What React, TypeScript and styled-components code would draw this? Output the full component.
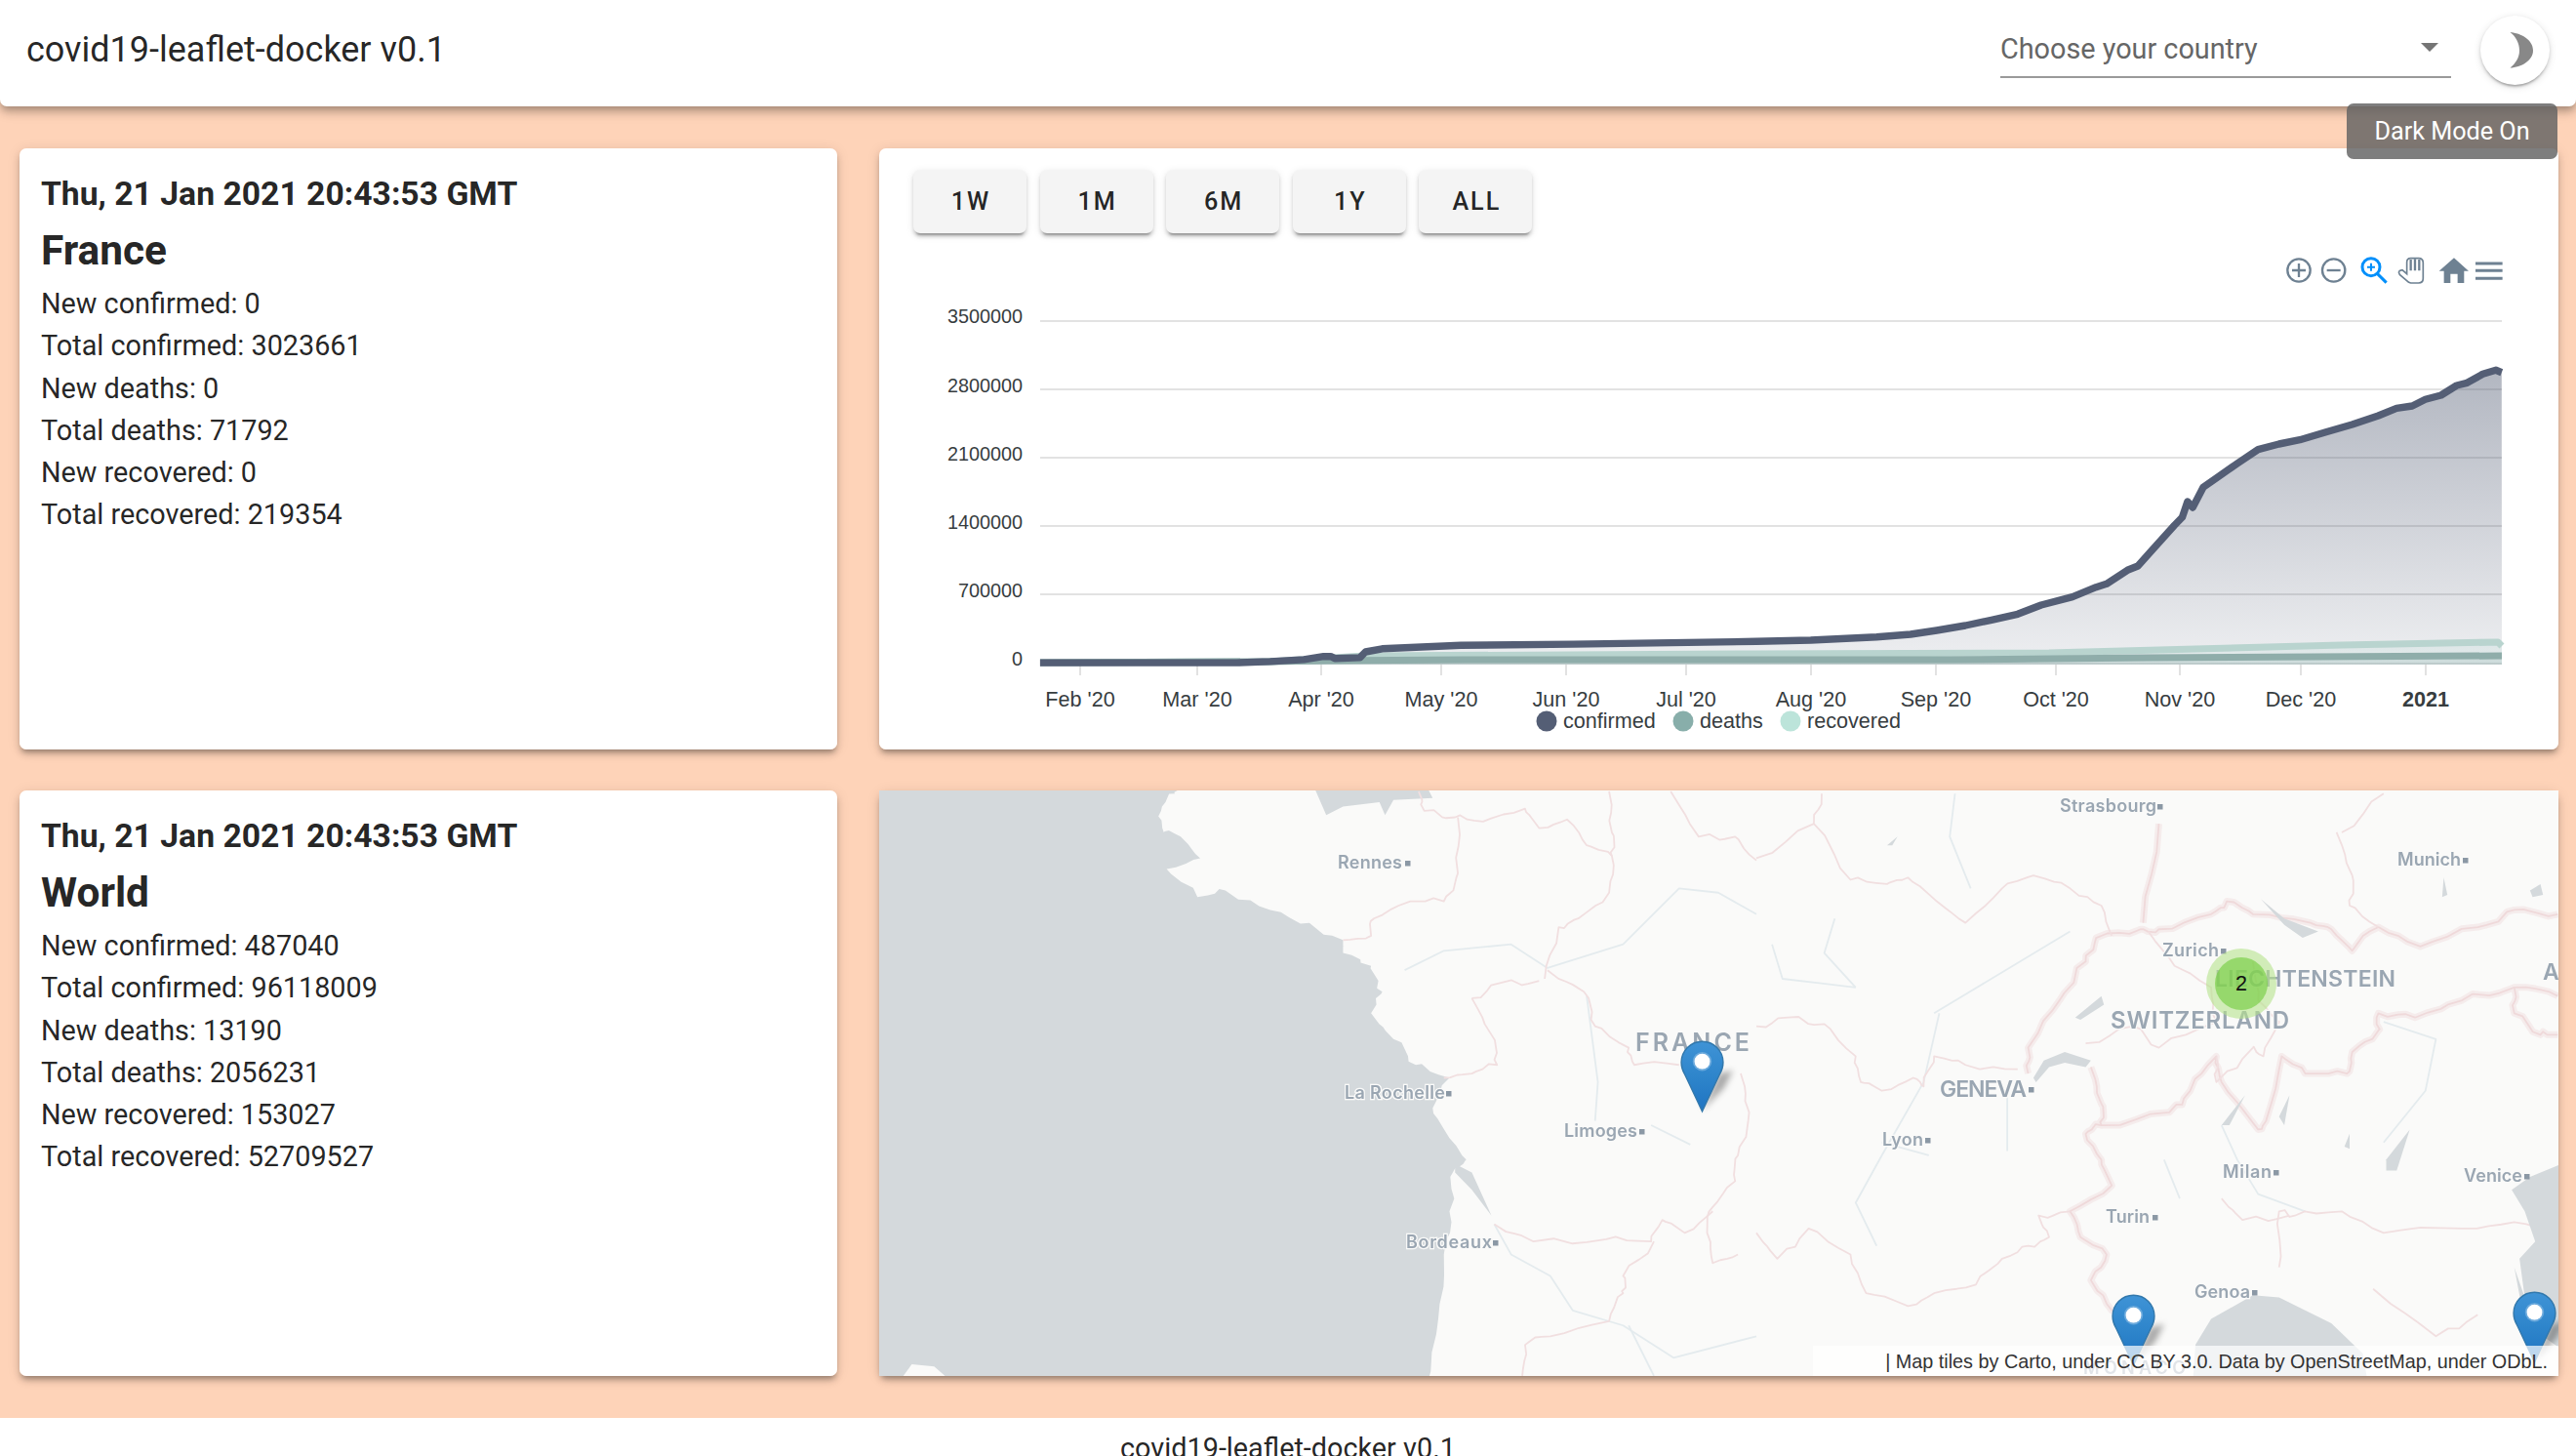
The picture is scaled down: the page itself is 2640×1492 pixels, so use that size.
import React from "react";
import styled, { createGlobalStyle } from "styled-components";

const GlobalStyle = createGlobalStyle`
  html, body {
    margin: 0;
    height: 100%;
    overflow: hidden;
    background: #fed3b8;
    font-family: Roboto, "Liberation Sans", sans-serif;
    color: rgba(0, 0, 0, 0.87);
  }
`;

const Header = styled.header`
  position: relative;
  z-index: 2;
  display: flex;
  align-items: center;
  justify-content: space-between;
  height: 109px;
  padding: 0 27px;
  background: #fff;
  border-radius: 0 0 7px 7px;
  box-shadow: 0 3.6px 7px -2px rgba(0, 0, 0, 0.2), 0 7px 9px 0 rgba(0, 0, 0, 0.14), 0 2px 18px 0 rgba(0, 0, 0, 0.12);
`;

const Title = styled.div`
  font-size: 36px;
  line-height: 1;
  margin-top: -8px;
`;

const Actions = styled.div`
  display: flex;
  align-items: flex-start;
  gap: 30px;
  height: 109px;
`;

const CountrySelect = styled.div`
  display: flex;
  align-items: center;
  justify-content: space-between;
  box-sizing: border-box;
  width: 462px;
  height: 64px;
  margin-top: 16px;
  padding: 6px 13px 0 0;
  border-bottom: 2px solid #9a9a9a;
  color: #666;
  font-size: 28.8px;
`;

const Caret = styled.span`
  width: 0;
  height: 0;
  margin-top: -4px;
  border-left: 9px solid transparent;
  border-right: 9px solid transparent;
  border-top: 9px solid #757575;
`;

const MoonButton = styled.button`
  display: block;
  width: 71px;
  height: 71px;
  margin-top: 16px;
  padding: 0;
  border: 0;
  border-radius: 50%;
  background: #fff;
  box-shadow: 0 3.6px 2px -2px rgba(0, 0, 0, 0.2), 0 2px 3.6px 0 rgba(0, 0, 0, 0.14), 0 2px 9px 0 rgba(0, 0, 0, 0.12);
  svg { display: block; }
`;

const Tooltip = styled.div`
  position: absolute;
  top: 106px;
  right: 19px;
  z-index: 3;
  box-sizing: border-box;
  width: 216px;
  height: 57px;
  border-radius: 7px;
  background: rgba(97, 97, 97, 0.82);
  color: #fff;
  font-size: 25.2px;
  line-height: 57px;
  text-align: center;
`;

const Main = styled.main`
  display: grid;
  grid-template-columns: 838px 1721px;
  grid-template-rows: 616px 600px;
  gap: 42px 43px;
  padding: 43px 18px 43px 20px;
`;

const Card = styled.section`
  position: relative;
  overflow: hidden;
  background: #fff;
  border-radius: 7px;
`;

const Shell = styled.div`
  border-radius: 7px;
  box-shadow: 0 5px 5px -3.6px rgba(0, 0, 0, 0.25), 0 5px 7px 0 rgba(0, 0, 0, 0.16), 0 2px 14px 0 rgba(0, 0, 0, 0.1);
`;

const InfoCard = styled(Card)`
  box-sizing: border-box;
  height: 100%;
  padding: 18px 22px;
`;

const Stamp = styled.div`
  font-size: 33.7px;
  font-weight: 700;
  line-height: 57.6px;
`;

const Place = styled.div`
  font-size: 42.4px;
  font-weight: 700;
  line-height: 57.6px;
`;

const Stats = styled.div`
  margin-top: 5px;
`;

const Stat = styled.div`
  font-size: 28.8px;
  line-height: 43.2px;
`;

const ChartCard = styled(Card)`
  height: 100%;
`;

const RangeBar = styled.div`
  display: flex;
  gap: 13.6px;
  padding: 22px 35px 0;
`;

const RangeButton = styled.button`
  width: 116px;
  height: 65px;
  padding: 0 0 0 2px;
  border: 0;
  border-radius: 7px;
  background: #f4f4f4;
  color: rgba(0, 0, 0, 0.87);
  font-family: Roboto, sans-serif;
  font-size: 25.2px;
  font-weight: 500;
  letter-spacing: 2px;
  box-shadow: 0 5px 2px -3px rgba(0, 0, 0, 0.25), 0 3.6px 3.6px 0 rgba(0, 0, 0, 0.14), 0 2px 9px 0 rgba(0, 0, 0, 0.1);
`;

const ChartSvg = styled.svg`
  display: block;
  width: 1721px;
  height: 529px;
  text {
    font-family: "Liberation Sans", Arial, sans-serif;
    fill: #373d3f;
  }
`;

const MapCard = styled(Card)`
  height: 100%;
  border-radius: 0;
`;

const MapSvg = styled.svg`
  display: block;
  width: 1721px;
  height: 600px;
  filter: blur(0.6px);
`;

const Thin = styled.polyline`
  fill: none;
  stroke: #f1dfe0;
  stroke-width: 1.8;
  vector-effect: non-scaling-stroke;
  stroke-linejoin: round;
`;

const Halo = styled(Thin)`
  stroke: #f5ecec;
  stroke-width: 7;
`;

const Core = styled(Thin)`
  stroke: #efd9da;
`;

const River = styled(Thin)`
  stroke: #e4ebee;
`;

const Water = styled.polygon`
  fill: #d4d9dc;
`;

const CityLabel = styled.text`
  font-family: Inter, "Open Sans", sans-serif;
  font-weight: 600;
  fill: #9aa6b2;
  stroke: #fafaf9;
  stroke-width: 2.5;
  paint-order: stroke;
`;

const CityDot = styled.rect`
  fill: #8b98a5;
`;

const Pin = styled.svg<{ $x: number; $y: number }>`
  position: absolute;
  left: ${(p) => p.$x}px;
  top: ${(p) => p.$y}px;
  overflow: visible;
`;

const Cluster = styled.div`
  position: absolute;
  left: 1360px;
  top: 162px;
  display: flex;
  align-items: center;
  justify-content: center;
  width: 72px;
  height: 72px;
  border-radius: 50%;
  background: rgba(181, 226, 140, 0.6);
`;

const ClusterCore = styled.div`
  width: 54px;
  height: 54px;
  border-radius: 50%;
  background: rgba(110, 204, 57, 0.6);
  color: #111;
  font-family: "Liberation Sans", Arial, sans-serif;
  font-size: 21.6px;
  line-height: 54px;
  text-align: center;
`;

const Attribution = styled.div`
  position: absolute;
  right: 0;
  bottom: 0;
  box-sizing: border-box;
  width: 764px;
  height: 31px;
  padding-right: 11px;
  background: rgba(255, 255, 255, 0.7);
  color: #333;
  font-family: "Liberation Sans", Arial, sans-serif;
  font-size: 19.8px;
  line-height: 33px;
  text-align: right;
  white-space: nowrap;
`;

const Footer = styled.footer`
  height: 60px;
  padding-top: 10px;
  background: #fff;
  font-size: 28.8px;
  line-height: 43.2px;
  text-align: center;
`;

type Point = [number, number];

const fromLeft = (pts: Point[]): Point[] => pts.map(([x, y]) => [900 + x / 1.742, 150 + y / 2.529]);
const fromRight = (pts: Point[]): Point[] => pts.map(([x, y]) => [1800 + x / 1.867, 340 + y / 3]);
const toPath = (pts: Point[]) => "M" + pts.map((p) => `${p[0].toFixed(1)} ${p[1].toFixed(1)}`).join("L");

// breaks straight runs up so borders and coasts don't look ruled
const wiggle = (points: string, amount = 9, steps = 4) => {
  const pts = points.split(" ").map((p) => p.split(",").map(Number));
  const out: string[] = [];
  let seed = 7;
  pts.forEach((p, i) => {
    out.push(p.join(","));
    const next = pts[i + 1];
    if (!next) return;
    for (let s = 1; s < steps; s++) {
      seed = (seed * 31 + 11) % 97;
      const t = s / steps;
      const dx = ((seed % 9) / 8 - 0.5) * amount;
      const dy = (((seed >> 2) % 9) / 8 - 0.5) * amount * 1.6;
      out.push(`${(p[0] + (next[0] - p[0]) * t + dx).toFixed(1)},${(p[1] + (next[1] - p[1]) * t + dy).toFixed(1)}`);
    }
  });
  return out.join(" ");
};

const confirmed: Point[] = [
  ...fromLeft([[289, 1338], [640, 1338], [700, 1335], [760, 1330], [795, 1322], [808, 1322], [815, 1327], [860, 1325], [870, 1310], [900, 1302], [1040, 1293], [1240, 1290]]),
  ...fromRight([[0, 952], [104, 948], [230, 938], [295, 930], [345, 918], [400, 903], [450, 886], [500, 868], [545, 840], [605, 815], [650, 785], [670, 775], [710, 733], [730, 720], [755, 675], [800, 595], [815, 570], [825, 522], [835, 540], [855, 478], [880, 450], [920, 405], [960, 362], [1000, 345], [1040, 332], [1090, 308], [1140, 285], [1190, 258], [1225, 235], [1255, 228], [1280, 208], [1310, 195], [1340, 165], [1360, 157], [1390, 130], [1415, 118], [1426, 125]]),
];
const deaths: Point[] = [[1066, 679], [1300, 678], [1360, 677], [1500, 676], [2000, 676], [2200, 674], [2564, 672]];
const recovered: Point[] = [[1066, 679], [1300, 678], [1400, 672], [1800, 670], [2100, 669], [2250, 665], [2400, 661], [2560, 658], [2564, 662]];

const closeArea = (pts: Point[]) => `${toPath(pts)}L2564 681L1066 681Z`;

const gridRows = [
  { value: "3500000", y: 329, base: 331 },
  { value: "2800000", y: 399, base: 402 },
  { value: "2100000", y: 469, base: 472 },
  { value: "1400000", y: 539, base: 542 },
  { value: "700000", y: 609, base: 612 },
  { value: "0", y: 680, base: 682 },
];

const months = [
  { label: "Feb '20", x: 1107 },
  { label: "Mar '20", x: 1227 },
  { label: "Apr '20", x: 1354 },
  { label: "May '20", x: 1477 },
  { label: "Jun '20", x: 1605 },
  { label: "Jul '20", x: 1728 },
  { label: "Aug '20", x: 1856 },
  { label: "Sep '20", x: 1984 },
  { label: "Oct '20", x: 2107 },
  { label: "Nov '20", x: 2234 },
  { label: "Dec '20", x: 2358 },
  { label: "2021", x: 2486 },
];

const legend = [
  { label: "confirmed", color: "#545e75", x: 1585 },
  { label: "deaths", color: "#88aeaa", x: 1725 },
  { label: "recovered", color: "#bce4da", x: 1835 },
];

const ToolIcons = () => (
  <g transform="translate(2280 240) scale(0.3333)" fill="none" stroke="#6e8192" strokeWidth="7">
    <circle cx="228" cy="111" r="35" />
    <path d="M228 90v42M207 111h42" />
    <circle cx="335" cy="111" r="35" />
    <path d="M314 111h42" />
    <g stroke="#008ffb" strokeWidth="9">
      <circle cx="450" cy="101" r="27" />
      <path d="M469 121l28 28" />
      <path d="M450 89v24M438 101h24" strokeWidth="6" />
    </g>
    <path d="M566 148L538 124Q530 112 546 110L560 122V86Q560 74 572 74H596Q610 74 610 88V136Q610 150 596 150H572Z" strokeWidth="5" />
    <path d="M572 78v34M585 76v36M598 78v34" strokeWidth="7" />
    <path d="M659 113L705 73L750 113H736V150H716V122H694V150H674V113Z" fill="#6e8192" stroke="none" />
    <path d="M771 90h83M771 112h83M771 136h83" strokeWidth="9" />
  </g>
);

const Chart = () => (
  <ChartSvg viewBox="901 239 1721 529">
    <defs>
      <linearGradient id="areaFade" x1="0" y1="0" x2="0" y2="1">
        <stop offset="0" stopColor="#545e75" stopOpacity="0.45" />
        <stop offset="1" stopColor="#545e75" stopOpacity="0.1" />
      </linearGradient>
    </defs>
    <ToolIcons />
    {gridRows.map((row) => (
      <g key={row.value}>
        <line x1="1066" x2="2564" y1={row.y} y2={row.y} stroke="#e2e2e2" strokeWidth="2" />
        <text x="1048" y={row.base} fontSize="19.8" textAnchor="end">{row.value}</text>
      </g>
    ))}
    {months.map((m) => (
      <g key={m.label}>
        <line x1={m.x} x2={m.x} y1="681" y2="692" stroke="#e2e2e2" strokeWidth="2" />
        <text x={m.x} y="724" fontSize="21.6" textAnchor="middle" fontWeight={m.label === "2021" ? 700 : 400}>{m.label}</text>
      </g>
    ))}
    <path d={closeArea(recovered)} fill="#bce4da" fillOpacity="0.2" />
    <path d={closeArea(deaths)} fill="#88aeaa" fillOpacity="0.2" />
    <path d={closeArea(confirmed)} fill="url(#areaFade)" />
    <path d={toPath(recovered)} fill="none" stroke="#b9d4cf" strokeWidth="7" strokeLinejoin="round" />
    <path d={toPath(deaths)} fill="none" stroke="#8fadaa" strokeWidth="7" strokeLinejoin="round" />
    <path d={toPath(confirmed)} fill="none" stroke="#545e75" strokeWidth="7.4" strokeLinejoin="round" />
    {legend.map((item) => (
      <g key={item.label}>
        <circle cx={item.x} cy="739" r="10.5" fill={item.color} />
        <text x={item.x + 17} y="746" fontSize="21.6">{item.label}</text>
      </g>
    ))}
  </ChartSvg>
);

const westCoast =
  "-20,-10 535,-10 530,30 505,70 510,120 540,130 575,180 515,205 570,270 620,255 700,300 770,330 830,370 830,400 880,430 900,490 880,540 920,600 960,660 1020,690 990,760 1020,830 1050,880 1030,900 1020,1000 1010,1100 1000,1250 980,1400 -20,1400";
const channel = "770,-10 800,80 830,60 895,50 905,80 920,45 990,40 970,-10";
const gironde = "1030,890 1060,910 1095,1010 1060,950 1030,910";

const leftBorders = [
  "965,25 975,70 1030,85 1080,95 1155,65 1180,110 1230,90 1265,150 1310,175 1305,260 1250,320 1215,340 1190,460",
  "1035,85 1035,215 1010,280 950,280 885,320 880,360 830,370",
  "1305,25 1310,120 1310,175",
  "1415,25 1465,130 1530,130 1568,185",
  "1195,440 1260,490 1280,570 1340,620 1350,660 1430,660",
  "1060,505 1110,470 1180,465",
  "1060,505 1095,590 1105,660 1060,680 1010,690",
  "1540,680 1555,770 1535,870 1530,930 1490,990 1480,1050 1490,1120 1535,1100",
  "1100,1030 1170,1070 1300,1065 1380,1070 1400,1020 1440,1050 1490,1000",
  "1385,1070 1330,1150 1330,1190 1305,1255 1200,1290 1155,1310 1150,1382",
];
const leftRivers = [
  "940,440 1010,395 1130,380 1195,435 1330,380 1430,250 1500,260 1568,310",
  "1265,500 1285,700 1280,790",
  "1380,800 1450,845",
  "1100,1030 1130,1100 1200,1150 1240,1230 1330,1265 1420,1340 1568,1290",
  "1340,1265 1385,1382",
];
const nationalBorders = [
  "1533,310 1450,300 1380,340 1270,385 1190,340 1140,395 1100,345 1060,330 950,310 900,280 870,310 770,345 735,345 650,365 630,420 580,510 520,620 520,680",
  "640,665 660,750 660,800 630,820 660,880 680,940 600,1000 620,1060 670,1100 640,1160 680,1230 720,1260",
  "660,800 790,770 830,720 880,640 890,700 960,810 975,790 1005,640 1050,680 1130,680 1140,630 1190,580 1190,540 1260,550 1350,510 1450,480 1533,500",
  "1450,480 1450,540 1500,590 1533,590",
  "770,100 740,330",
];
const rightBorders = [
  "125,30 110,100 180,230 250,240 290,225 345,280 400,330 470,250 530,220 600,250 660,290 680,360",
  "0,180 110,100",
  "0,570 60,550 130,565 190,640 200,700 240,720 300,690 320,710 340,640 400,660 500,670",
  "0,1050 40,1110 100,1040 180,1100 210,1190 290,1220 340,1190 420,1170 470,1110 520,1080 560,1060 540,1010 600,1000",
  "1110,120 1140,220 1135,290 1190,340",
  "1120,120 1200,30",
  "1000,1130 1000,1000 1030,1010 1120,1000 1200,1050 1350,1040 1450,1025 1533,1050",
  "890,970 930,1020 1020,1010",
  "1180,1180 1300,1290 1380,1240",
  "1490,1040 1533,1100",
  "880,640 880,700 950,620 970,640 1000,560 960,510 950,420",
  "630,610 720,570 770,620 880,560 870,480 800,430 750,350",
];
const rightRivers = [
  "380,30 370,130 410,250",
  "30,380 50,460 120,470 190,480",
  "150,320 130,400 190,480",
  "350,540 320,700 240,870 190,980 230,1080",
  "480,720 480,860",
  "600,350 340,540",
  "240,840 330,870",
  "890,800 920,880 960,960 1050,1000",
  "1200,560 1300,600 1280,720 1200,840",
  "780,880 810,970",
];
const lakes = [
  "530,690 550,650 590,630 640,650 630,665 590,655 560,665 535,700",
  "610,550 660,500 665,520 620,555",
  "965,275 1010,320 1075,350 1045,365 1010,335",
  "890,800 935,730 905,800",
  "1205,880 1250,810 1225,905 1205,905",
  "1010,800 1020,730 1000,780",
  "250,150 270,130 260,150",
  "1315,225 1322,265 1312,270",
  "1480,255 1500,240 1505,265 1485,270",
  "1125,850 1135,820 1135,855",
  "835,1400 840,1310 870,1250 950,1195 1000,1200 1100,1260 1160,1330 1170,1400",
  "1540,890 1480,920 1445,950 1470,1000 1490,1070 1460,1110 1470,1200 1450,1130 1470,1260 1540,1320",
];

const cities: { name: string; from: number; to: number; y: number; size: number; dot?: number }[] = [
  { name: "Rennes", from: 1371, to: 1437, y: 884, size: 18, dot: 1443 },
  { name: "La Rochelle", from: 1378, to: 1481, y: 1120, size: 18, dot: 1485 },
  { name: "Limoges", from: 1603, to: 1678, y: 1159, size: 18, dot: 1683 },
  { name: "Bordeaux", from: 1441, to: 1529, y: 1273, size: 18, dot: 1533 },
  { name: "FRANCE", from: 1676, to: 1793, y: 1068, size: 25 },
  { name: "Strasbourg", from: 2111, to: 2210, y: 826, size: 18, dot: 2214 },
  { name: "Munich", from: 2457, to: 2522, y: 881, size: 18, dot: 2527 },
  { name: "Zurich", from: 2216, to: 2274, y: 974, size: 18, dot: 2279 },
  { name: "LIECHTENSTEIN", from: 2270, to: 2455, y: 1003, size: 23 },
  { name: "SWITZERLAND", from: 2163, to: 2346, y: 1045, size: 24 },
  { name: "GENEVA", from: 1988, to: 2077, y: 1116, size: 23, dot: 2082 },
  { name: "Lyon", from: 1929, to: 1971, y: 1168, size: 18, dot: 1976 },
  { name: "Milan", from: 2278, to: 2328, y: 1201, size: 18, dot: 2333 },
  { name: "Venice", from: 2525, to: 2585, y: 1205, size: 18, dot: 2590 },
  { name: "Turin", from: 2158, to: 2203, y: 1247, size: 18, dot: 2209 },
  { name: "Genoa", from: 2249, to: 2306, y: 1324, size: 18, dot: 2311 },
  { name: "A", from: 2606, to: 2622, y: 996, size: 23 },
  { name: "MONACO", from: 2135, to: 2240, y: 1402, size: 18 },
];

const MapTiles = () => (
  <MapSvg viewBox="901 810 1721 600">
    <rect x="901" y="810" width="1721" height="600" fill="#fafaf9" />
    <g transform="translate(900 800) scale(0.574 0.4413)">
      <Water points={wiggle(westCoast, 12)} />
      <Water points={channel} />
      <Water points={gironde} />
      <polygon points="35,1400 60,1355 100,1360 135,1400" fill="#fafaf9" />
      {leftRivers.map((p) => <River key={p} points={p} />)}
      {leftBorders.map((p) => <Thin key={p} points={wiggle(p)} />)}
    </g>
    <g transform="translate(1800 800) scale(0.5357 0.4413)">
      {rightRivers.map((p) => <River key={p} points={p} />)}
      {nationalBorders.map((p) => <Halo key={p} points={wiggle(p)} />)}
      {nationalBorders.map((p) => <Core key={p} points={wiggle(p)} />)}
      {rightBorders.map((p) => <Thin key={p} points={wiggle(p)} />)}
      {lakes.map((p) => <Water key={p} points={p} />)}
    </g>
    {cities.map((c) => (
      <g key={c.name}>
        <CityLabel x={c.from} y={c.y + c.size * 0.36} fontSize={c.size} textLength={c.to - c.from} lengthAdjust="spacing">
          {c.name}
        </CityLabel>
        {c.dot && <CityDot x={c.dot - 3} y={c.y - 2} width="5.5" height="5.5" />}
      </g>
    ))}
  </MapSvg>
);

const Marker = ({ x, y }: { x: number; y: number }) => (
  <Pin $x={x} $y={y} width="45" height="74" viewBox="0 0 25 41">
    <defs>
      <linearGradient id="pinFill" x1="0" y1="0" x2="0" y2="1">
        <stop offset="0" stopColor="#3f93d6" />
        <stop offset="0.5" stopColor="#2e85cb" />
        <stop offset="1" stopColor="#1f74c2" />
      </linearGradient>
      <filter id="pinShadow" x="-50%" y="-50%" width="200%" height="200%">
        <feGaussianBlur stdDeviation="1.8" />
      </filter>
    </defs>
    <polygon points="12.5,40 22,19 30,17 25,27" fill="#000" fillOpacity="0.32" filter="url(#pinShadow)" />
    <path
      d="M12.5 .6C5.9 .6 .6 5.9 .6 12.5C.6 14.8 1.2 17 2.4 19L12.5 40.4L22.6 19C23.8 17 24.4 14.8 24.4 12.5C24.4 5.9 19.1 .6 12.5 .6Z"
      fill="url(#pinFill)"
      stroke="#3278ac"
      strokeWidth="0.8"
    />
    <circle cx="12.5" cy="12" r="5.4" fill="#6aa9dc" />
    <circle cx="12.5" cy="12" r="4.4" fill="#fff" />
  </Pin>
);

const Moon = () => (
  <svg width="71" height="71" viewBox="0 0 71 71">
    <path d="M30.5 17C42 18 54 25 54 35.7C54 46 42 53 30.5 53.5C36 49 40 43 40 35.7C40 28 36 21 30.5 17Z" fill="#888" />
  </svg>
);

const InfoPanel = ({ place, stats }: { place: string; stats: string[] }) => (
  <Shell>
    <InfoCard>
      <Stamp>Thu, 21 Jan 2021 20:43:53 GMT</Stamp>
      <Place>{place}</Place>
      <Stats>
        {stats.map((line) => <Stat key={line}>{line}</Stat>)}
      </Stats>
    </InfoCard>
  </Shell>
);

const franceStats = ["New confirmed: 0", "Total confirmed: 3023661", "New deaths: 0", "Total deaths: 71792", "New recovered: 0", "Total recovered: 219354"];
const worldStats = ["New confirmed: 487040", "Total confirmed: 96118009", "New deaths: 13190", "Total deaths: 2056231", "New recovered: 153027", "Total recovered: 52709527"];
const ranges = ["1W", "1M", "6M", "1Y", "ALL"];

export default function App() {
  return (
    <>
      <GlobalStyle />
      <Header>
        <Title>covid19-leaflet-docker v0.1</Title>
        <Actions>
          <CountrySelect>
            Choose your country
            <Caret />
          </CountrySelect>
          <MoonButton aria-label="Dark mode">
            <Moon />
          </MoonButton>
        </Actions>
      </Header>
      <Tooltip>Dark Mode On</Tooltip>
      <Main>
        <InfoPanel place="France" stats={franceStats} />
        <Shell>
          <ChartCard>
            <RangeBar>
              {ranges.map((r) => <RangeButton key={r}>{r}</RangeButton>)}
            </RangeBar>
            <Chart />
          </ChartCard>
        </Shell>
        <InfoPanel place="World" stats={worldStats} />
        <Shell>
          <MapCard>
            <MapTiles />
            <Marker x={821} y={256} />
            <Marker x={1263} y={516} />
            <Marker x={1674} y={513} />
            <Cluster>
              <ClusterCore>2</ClusterCore>
            </Cluster>
            <Attribution>| Map tiles by Carto, under CC BY 3.0. Data by OpenStreetMap, under ODbL.</Attribution>
          </MapCard>
        </Shell>
      </Main>
      <Footer>covid19-leaflet-docker v0.1</Footer>
    </>
  );
}
